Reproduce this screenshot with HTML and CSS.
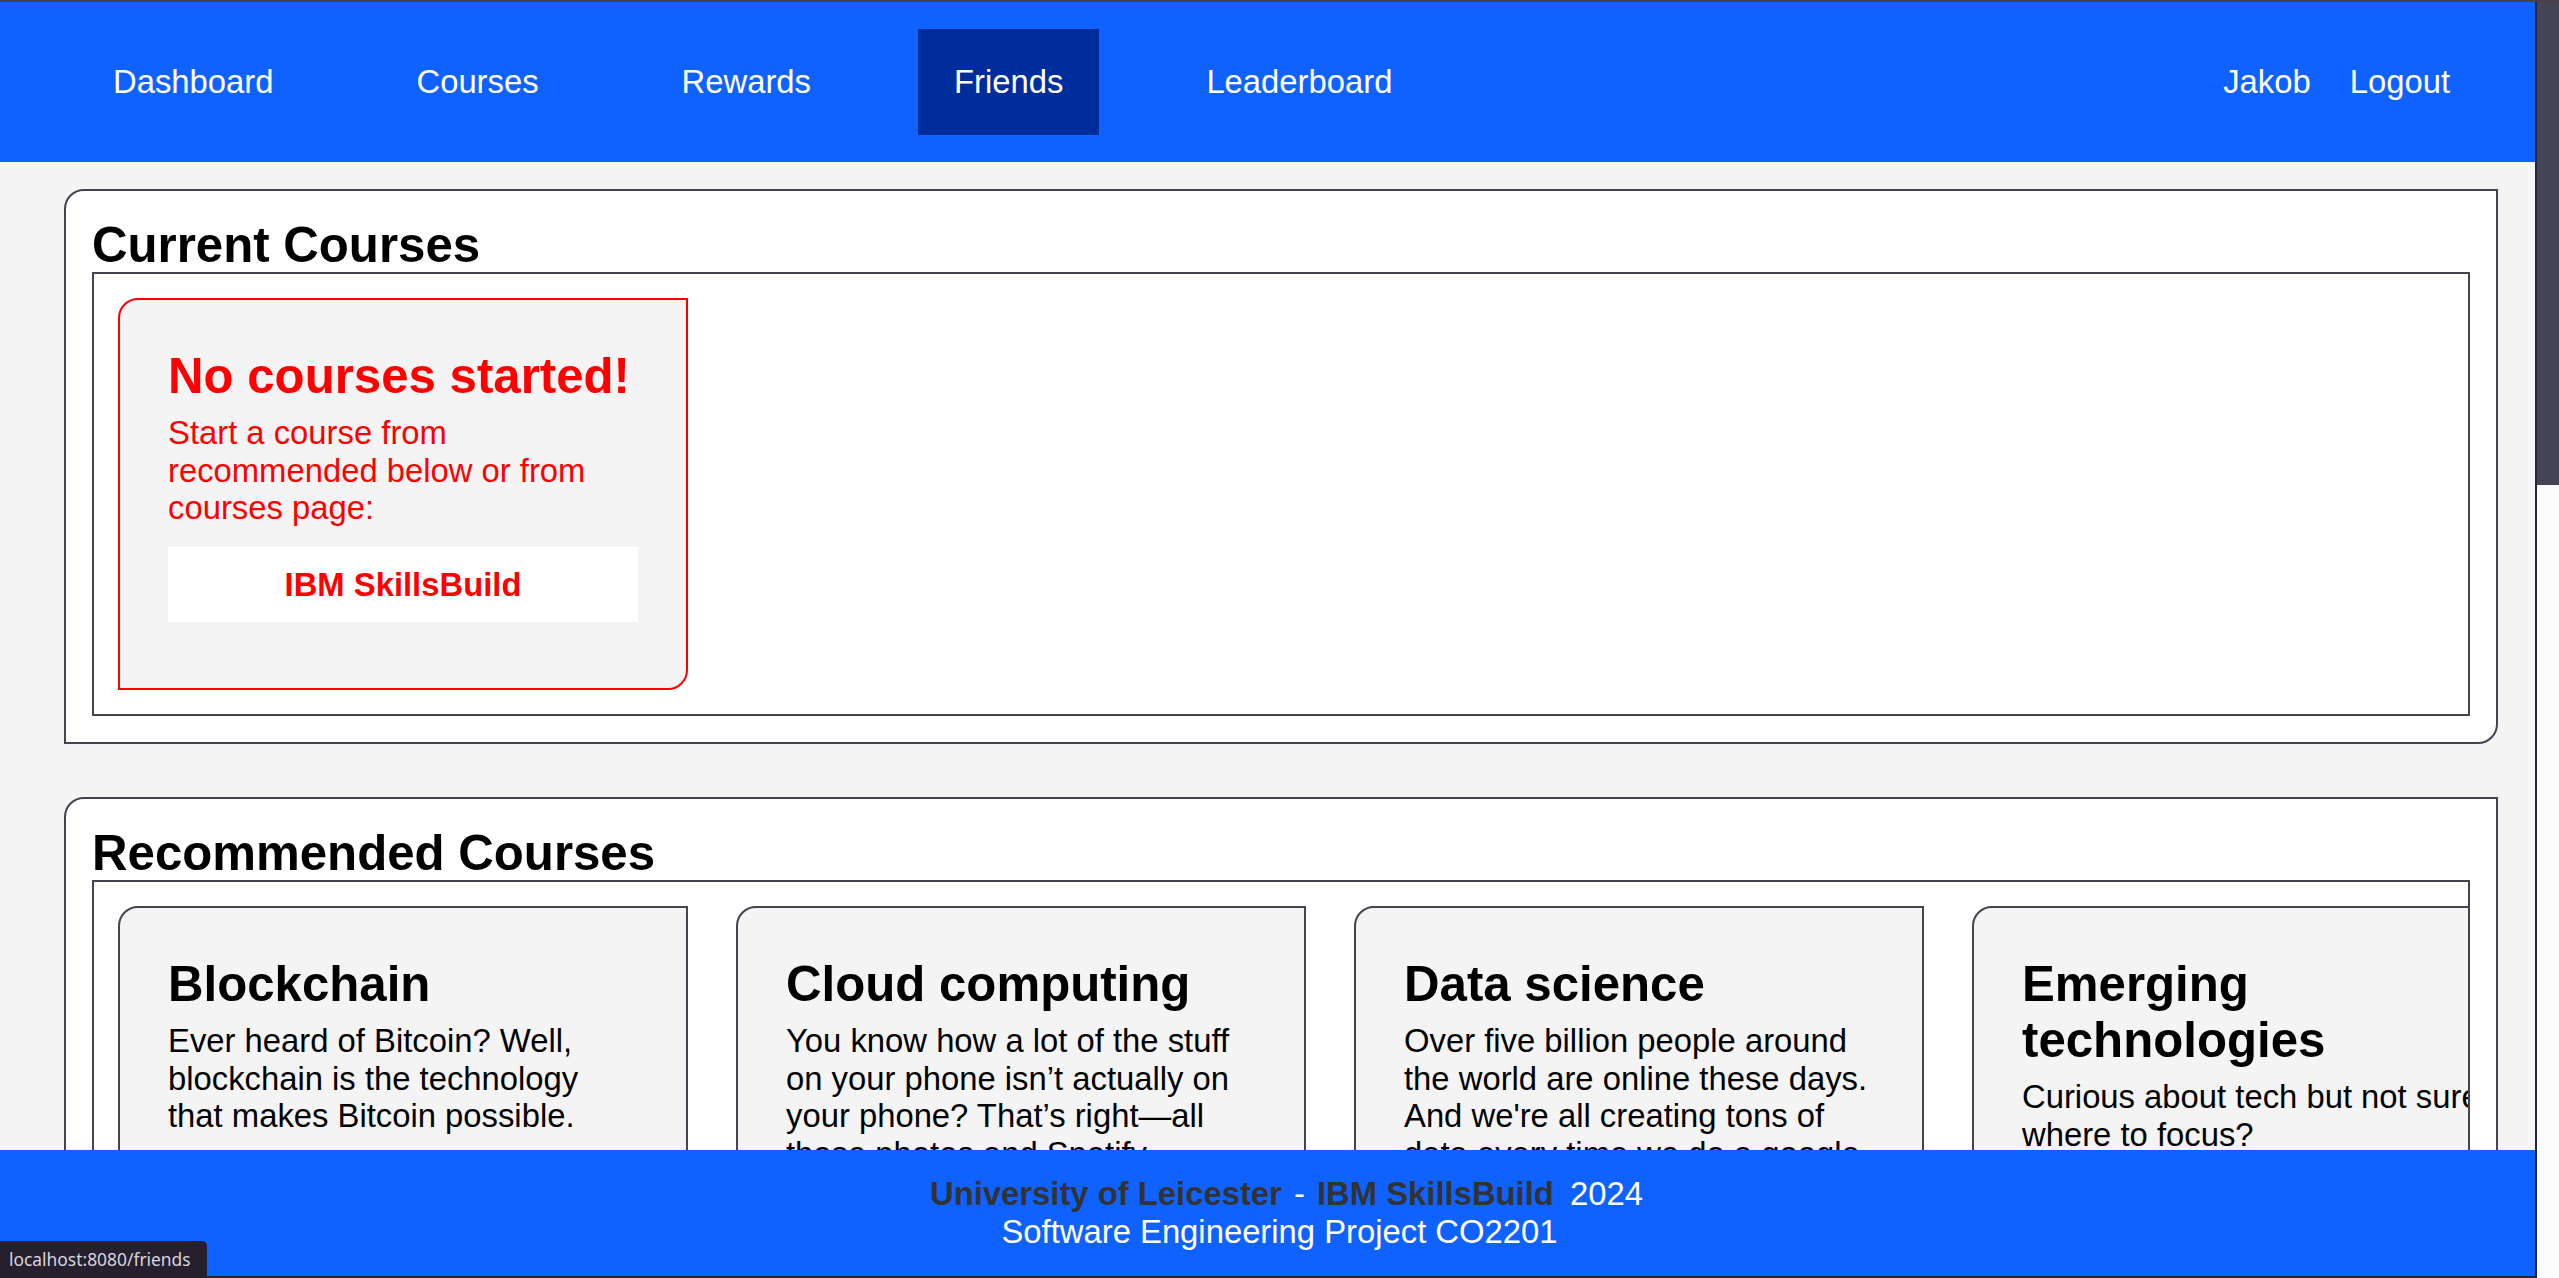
FILE: index.html
```html
<!DOCTYPE html>
<html lang="en">
<head>
<meta charset="utf-8">
<title>Friends</title>
<link rel="stylesheet" href="styles.css">
</head>
<body>
<div class="frame">
  <div class="viewport">
    <nav class="topnav">
      <ul class="nav-links">
        <li><a href="#">Dashboard</a></li>
        <li><a href="#">Courses</a></li>
        <li><a href="#">Rewards</a></li>
        <li><a href="#" class="active">Friends</a></li>
        <li><a href="#">Leaderboard</a></li>
      </ul>
      <ul class="nav-user">
        <li><a href="#">Jakob</a></li>
        <li><a href="#">Logout</a></li>
      </ul>
    </nav>
    <main class="content">
      <section class="panel">
        <h2 class="panel-title">Current Courses</h2>
        <div class="course-row">
          <article class="course-card empty">
            <h3 class="card-title">No courses started!</h3>
            <p class="card-text">Start a course from recommended below or from courses page:</p>
            <a href="#" class="skills-btn">IBM SkillsBuild</a>
          </article>
        </div>
      </section>
      <section class="panel">
        <h2 class="panel-title">Recommended Courses</h2>
        <div class="course-row">
          <article class="course-card">
            <h3 class="card-title">Blockchain</h3>
            <p class="card-text">Ever heard of Bitcoin? Well, blockchain is the technology that makes Bitcoin possible.</p>
          </article>
          <article class="course-card">
            <h3 class="card-title">Cloud computing</h3>
            <p class="card-text">You know how a lot of the stuff on your phone isn’t actually on your phone? That’s right—all those photos and Spotify playlists are stored in the cloud.</p>
          </article>
          <article class="course-card">
            <h3 class="card-title">Data science</h3>
            <p class="card-text">Over five billion people around the world are online these days. And we're all creating tons of data every time we do a google search.</p>
          </article>
          <article class="course-card">
            <h3 class="card-title">Emerging technologies</h3>
            <p class="card-text">Curious about tech but not sure where to focus?</p>
          </article>
        </div>
      </section>
    </main>
    <footer class="site-footer">
      <div class="footer-line footer-first"><strong class="footer-strong">University of Leicester</strong><span class="footer-dash"> - </span><strong class="footer-strong">IBM SkillsBuild</strong> <span class="footer-year">2024</span></div>
      <div class="footer-line">Software Engineering Project CO2201</div>
    </footer>
  </div>
  <div class="scrollbar"><div class="scroll-thumb"></div></div>
  <div class="status-bubble">localhost:8080/friends</div>
</div>
</body>
</html>
```

FILE: styles.css
```css
* {
  box-sizing: border-box;
}

html, body {
  margin: 0;
  padding: 0;
  background: #f4f4f4;
}

body {
  font-family: "Liberation Sans", Arial, sans-serif;
  font-size: 32.8px;
  line-height: 37.7px;
  color: #000;
}

.frame {
  position: relative;
  width: 2559px;
  height: 1278px;
  border-top: 2px solid #46414a;
  display: grid;
  grid-template-columns: 2535px 2px 22px;
  background: #fbfbfb;
  overflow: hidden;
}

.frame::before {
  content: "";
  background: #24243a;
  grid-column: 2;
  grid-row: 1;
}

.viewport {
  grid-column: 1;
  grid-row: 1;
  height: 1276px;
  display: flex;
  flex-direction: column;
  background: #f4f4f4;
  border-bottom: 2px solid #24243a;
}

/* ---------- top navigation ---------- */
.topnav {
  flex: 0 0 160px;
  height: 160px;
  background: #0f62fe;
  display: flex;
  align-items: center;
  justify-content: space-between;
  padding: 0 85px 0 77px;
}

.nav-links,
.nav-user {
  list-style: none;
  margin: 0;
  padding: 0;
  display: flex;
  align-items: center;
}

.nav-links {
  gap: 71px;
}

.nav-user {
  gap: 39px;
}

.nav-links a,
.nav-user a {
  display: block;
  color: #fff;
  text-decoration: none;
  font-size: 32.8px;
}

.nav-links a {
  padding: 34.6px 36px;
}

.nav-links a.active {
  background: #002d9c;
}

/* ---------- main content ---------- */
.content {
  flex: 1 1 auto;
  min-height: 0;
  overflow: hidden;
  padding: 27px 37px 0 64px;
  display: flex;
  flex-direction: column;
  gap: 53px;
}

.panel {
  flex-shrink: 0;
  background: #fff;
  border: 2px solid #45434f;
  border-radius: 20px 0 20px 0;
  padding: 26px;
}

.panel-title {
  margin: 0;
  font-size: 49.2px;
  font-weight: 700;
  line-height: 55px;
}

.course-row {
  border: 2px solid #45434f;
  background: #fff;
  padding: 24px;
  display: flex;
  align-items: flex-start;
  gap: 48px;
  overflow: hidden;
}

.course-card {
  flex: 0 0 570px;
  width: 570px;
  background: #f4f4f4;
  border: 2px solid #45434f;
  border-radius: 20px 0 20px 0;
  padding: 48px 48px 66px;
}

.card-title {
  margin: 0 0 10px;
  font-size: 49.2px;
  font-weight: 700;
  line-height: 56px;
}

.card-text {
  margin: 0;
  font-size: 32.8px;
}

.course-card.empty {
  border-color: #ff0000;
  color: #ff0000;
}

.skills-btn {
  display: block;
  margin-top: 20px;
  background: #fff;
  color: #ff0000;
  font-weight: 700;
  text-align: center;
  text-decoration: none;
  padding: 18.6px 0;
}

/* ---------- footer ---------- */
.site-footer {
  flex: 0 0 126px;
  height: 126px;
  background: #0f62fe;
  color: #fff;
  text-align: center;
  padding: 25px 0 0 24px;
}

.footer-first {
  padding-left: 14px;
}

.footer-strong {
  color: #333;
}

.footer-dash {
  margin: 0 3px;
}

.footer-year {
  margin-left: 7px;
}

/* ---------- fake browser chrome ---------- */
.scrollbar {
  grid-column: 3;
  grid-row: 1;
  background: #fbfbfb;
}

.scroll-thumb {
  height: 483px;
  background: #454457;
}

.status-bubble {
  position: absolute;
  left: 0;
  bottom: 0;
  width: 207px;
  height: 37px;
  background: #261f2e;
  color: #d6d6de;
  border-top-right-radius: 5px;
  font-family: "Noto Sans", "Open Sans", sans-serif;
  font-size: 17.4px;
  line-height: 37px;
  padding-left: 9px;
  white-space: nowrap;
}
```
